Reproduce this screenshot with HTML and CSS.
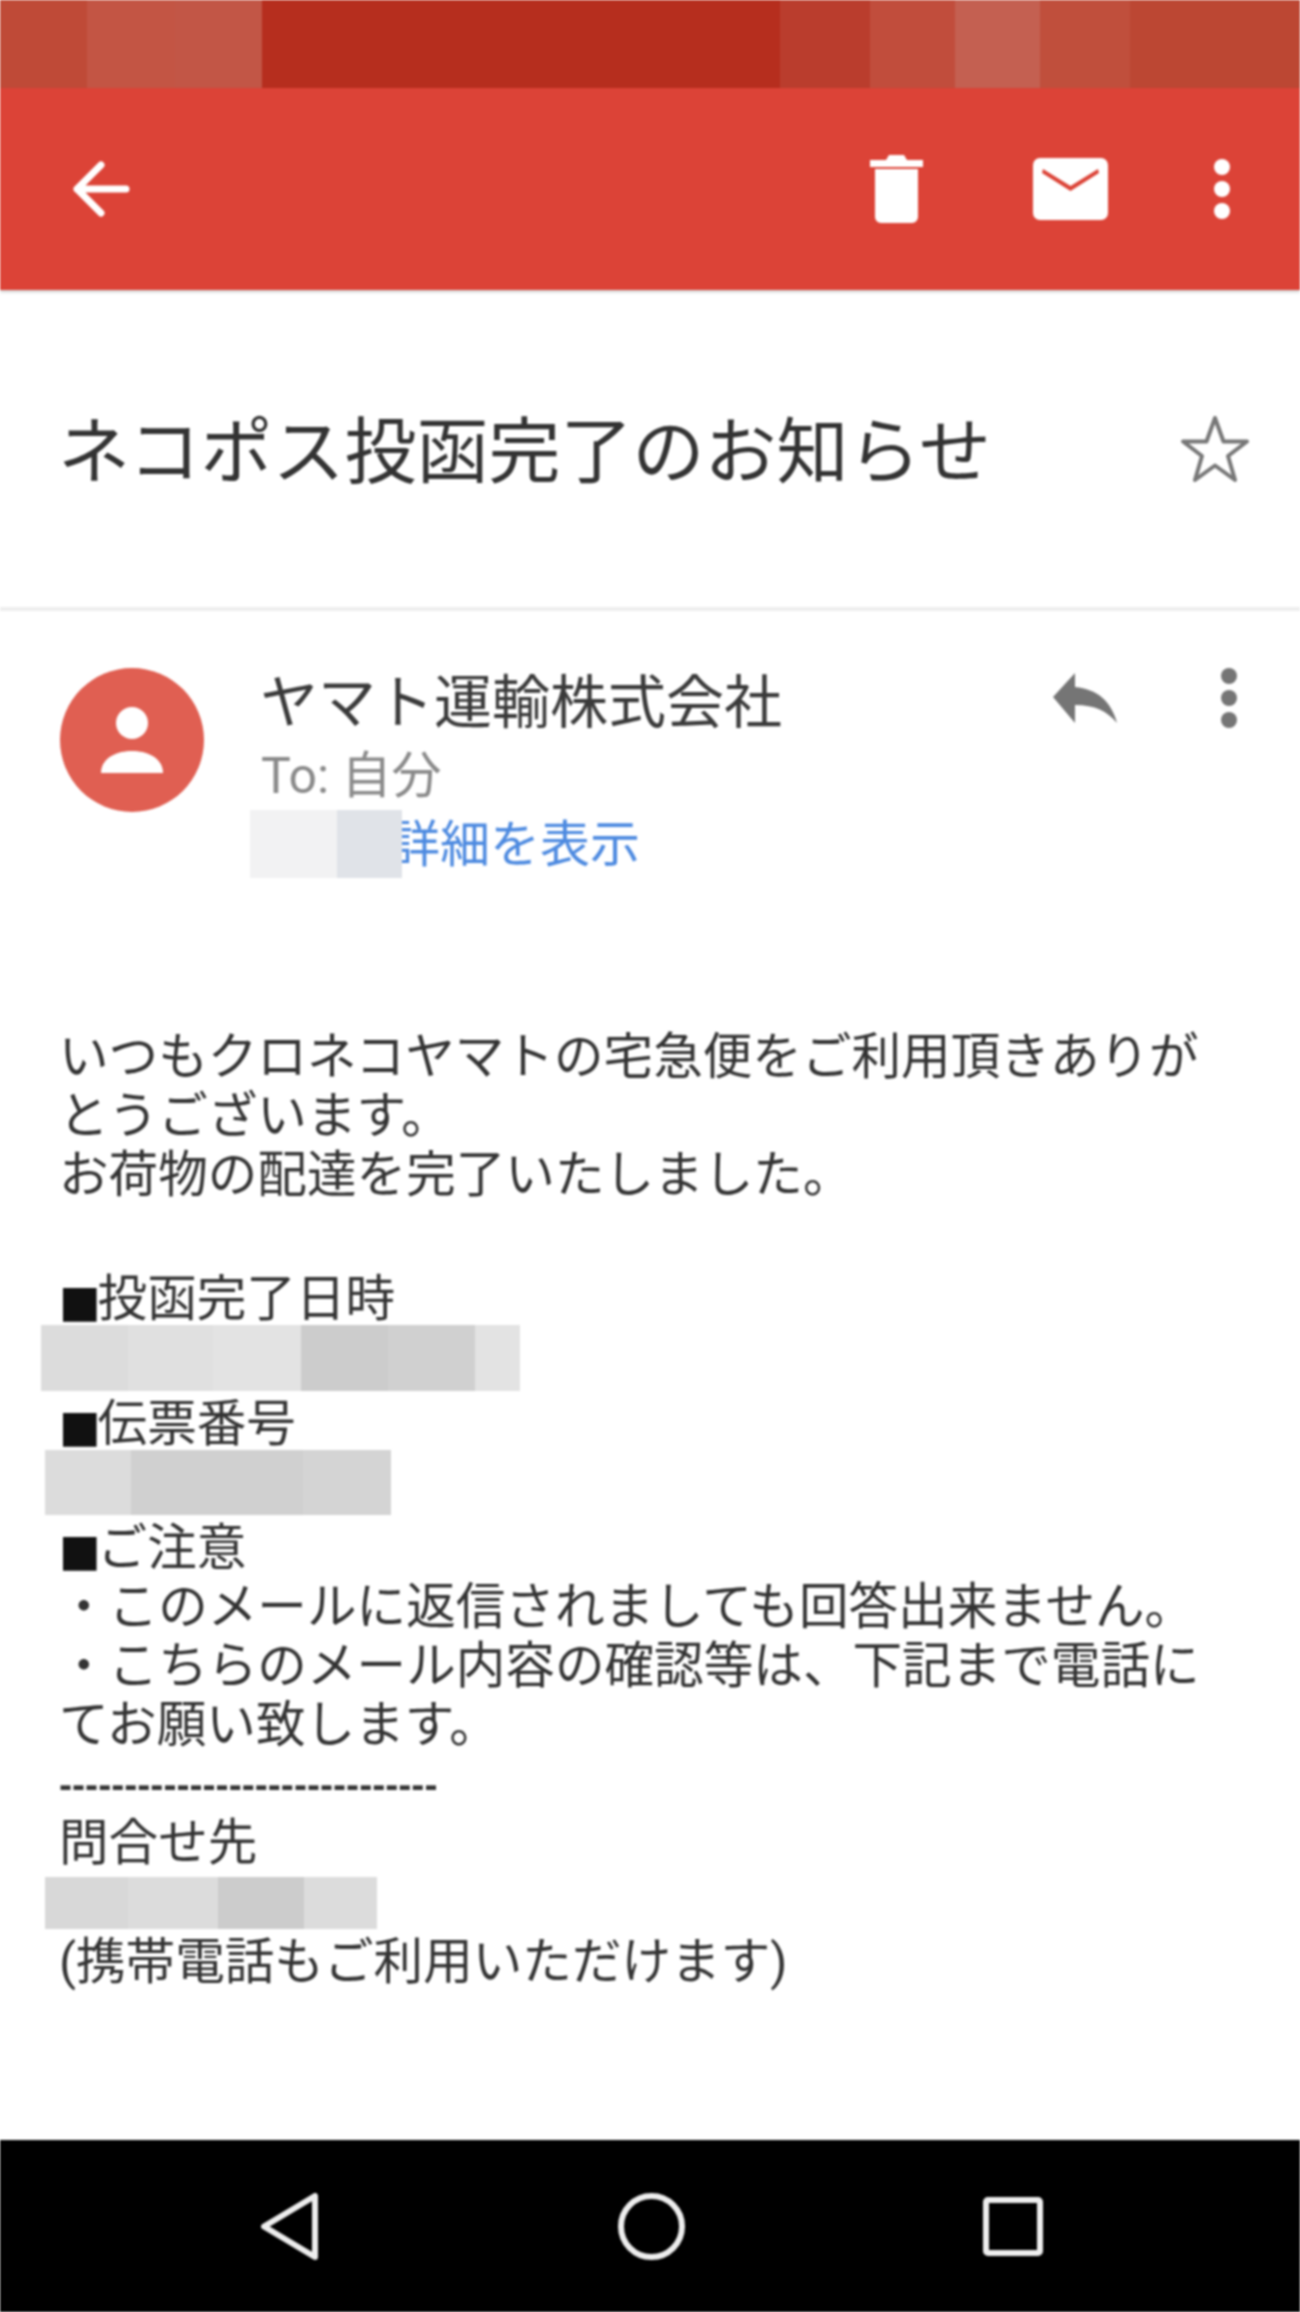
FILE: index.html
```html
<!DOCTYPE html>
<html lang="ja">
<head>
    <meta charset="UTF-8">
    <title>ネコポス投函完了のお知らせ</title>
    <link rel="stylesheet" href="styles.css">
</head>
<body>

<div class="screen">
    <div class="status-bar">
        <div class="shade-a"></div>
        <div class="shade-b"></div>
        <div class="shade-c"></div>
        <div class="shade-d"></div>
        <div class="shade-e"></div>
        <div class="shade-f"></div>
        <div class="shade-g"></div>
        <div class="shade-h"></div>
        <div class="shade-i"></div>
    </div>

    <div class="toolbar">
        <svg class="icon-back" viewBox="0 0 58 58"><path d="M54 29H5M29 5L5 29l24 24" fill="none" stroke="#fff" stroke-width="7" stroke-linecap="round" stroke-linejoin="round"/></svg>
        <div class="toolbar-actions">
            <svg class="icon-trash" viewBox="0 0 53 68"><path d="M0 5h16l3-5h15l3 5h16v7H0zM5 14h43v48a6 6 0 0 1-6 6H11a6 6 0 0 1-6-6z" fill="#fff"/></svg>
            <svg class="icon-mail" viewBox="0 0 75 62"><path d="M7 0h61a7 7 0 0 1 7 7v48a7 7 0 0 1-7 7H7a7 7 0 0 1-7-7V7a7 7 0 0 1 7-7zM10 11l-1 4 28.500 18L66 15l-1-4-27.500 17z" fill="#fff" fill-rule="evenodd"/></svg>
            <svg class="icon-dots" viewBox="0 0 16 60"><circle cx="8" cy="8" r="8"/><circle cx="8" cy="30" r="8"/><circle cx="8" cy="52" r="8"/></svg>
        </div>
    </div>

    <div class="subject-row">
        <h1 class="subject">ネコポス投函完了のお知らせ</h1>
        <svg class="icon-star" viewBox="0 0 70 70"><path d="M35 4l8.500 23.500H67L48 42l7 24-20-14.500L15 66l7-24L3 27.500h23.500z" fill="none" stroke="#777" stroke-width="4" stroke-linejoin="round"/></svg>
    </div>

    <div class="message-head">
        <div class="avatar">
            <svg class="icon-person" viewBox="0 0 62 66"><circle cx="31" cy="16" r="16" fill="#fff"/><path d="M0 66c0-14 14-22 31-22s31 8 31 22z" fill="#fff"/></svg>
        </div>
        <div class="sender-info">
            <div class="sender-name">ヤマト運輸株式会社</div>
            <div class="sender-to">To: 自分</div>
            <div class="sender-details">
                <div class="mosaic mosaic-sender">
                    <div class="tint-f2"></div>
                    <div class="tint-e0"></div>
                </div>
                <a class="details-link">詳細を表示</a>
            </div>
        </div>
        <div class="message-actions">
            <svg class="icon-reply" viewBox="0 0 64 50"><path d="M22 0v14c22 2 36 14 42 36-10-12-22-18-42-18v18L0 24z" fill="#757575"/></svg>
            <svg class="icon-dots icon-dots-gray" viewBox="0 0 16 60"><circle cx="8" cy="8" r="8"/><circle cx="8" cy="30" r="8"/><circle cx="8" cy="52" r="8"/></svg>
        </div>
    </div>

    <div class="message-body">
        <p>いつもクロネコヤマトの宅急便をご利用頂きありがとうございます。<br>お荷物の配達を完了いたしました。</p>

        <p class="section-first"><span class="mark">■</span>投函完了日時</p>
        <div class="mosaic mosaic-date">
            <div class="tint-dc"></div>
            <div class="tint-e0"></div>
            <div class="tint-e3"></div>
            <div class="tint-cc"></div>
            <div class="tint-d0"></div>
            <div class="tint-e3"></div>
        </div>

        <p><span class="mark">■</span>伝票番号</p>
        <div class="mosaic mosaic-slip">
            <div class="tint-dc"></div>
            <div class="tint-d0"></div>
            <div class="tint-d4"></div>
        </div>

        <p><span class="mark">■</span>ご注意</p>
        <p>・このメールに返信されましても回答出来ません。</p>
        <p>・こちらのメール内容の確認等は、下記まで電話にてお願い致します。</p>
        <p class="dashes">-----------------------------</p>
        <p>問合せ先</p>
        <div class="mosaic mosaic-phone">
            <div class="tint-d8"></div>
            <div class="tint-dc"></div>
            <div class="tint-cc"></div>
            <div class="tint-dc"></div>
        </div>
        <p>(携帯電話もご利用いただけます)</p>
    </div>

    <div class="nav-bar">
        <svg class="icon-nav-back" viewBox="0 0 57 67"><path d="M54 3v61L3 33.500z" fill="none" stroke="#eee" stroke-width="6" stroke-linejoin="round"/></svg>
        <svg class="icon-nav-home" viewBox="0 0 67 67"><circle cx="33.500" cy="33.500" r="30.500" fill="none" stroke="#eee" stroke-width="6"/></svg>
        <svg class="icon-nav-recent" viewBox="0 0 60 59"><rect x="3" y="3" width="54" height="53" rx="2" fill="none" stroke="#eee" stroke-width="6"/></svg>
    </div>
</div>

</body>
</html>
```

FILE: styles.css
```css
html, body {
    margin: 0;
    padding: 0;
    background-color: #fff;
}
body {
    font-family: Roboto, "Noto Sans CJK JP", sans-serif;
}
.screen {
    display: flex;
    flex-direction: column;
    width: 1300px;
    height: 2312px;
    overflow: hidden;
    filter: blur(1.1px);
}

/* Status bar, mosaic over the real icons */
.status-bar {
    display: grid;
    grid-template-columns: 87px 88px 87px 518px 90px 85px 85px 90px 1fr;
    height: 88px;
    flex: none;
}
.shade-a { background-color: #bf4a37; }
.shade-b { background-color: #c35544; }
.shade-c { background-color: #c25646; }
.shade-d { background-color: #b62e1e; }
.shade-e { background-color: #ba3d2d; }
.shade-f { background-color: #c14d3c; }
.shade-g { background-color: #c46051; }
.shade-h { background-color: #c04f3c; }
.shade-i { background-color: #bc4733; }

.toolbar {
    display: flex;
    align-items: center;
    justify-content: space-between;
    flex: none;
    height: 202px;
    padding: 0 70px 0 72px;
    background-color: #dc4337;
    box-shadow: 0 2px 3px rgba(0, 0, 0, 0.2);
}
.toolbar-actions {
    display: flex;
    align-items: center;
}
.icon-back {
    width: 58px;
    height: 58px;
}
.icon-trash {
    width: 53px;
    height: 68px;
    margin-right: 110px;
}
.icon-mail {
    width: 75px;
    height: 62px;
    margin-right: 106px;
}
.icon-dots {
    width: 16px;
    height: 60px;
    fill: #fff;
}
.icon-dots-gray {
    fill: #757575;
}

.subject-row {
    display: flex;
    align-items: center;
    justify-content: space-between;
    flex: none;
    height: 317px;
    padding: 0 50px 0 58px;
    border-bottom: 4px solid #eee;
}
.subject {
    margin: 0 0 6px;
    font-size: 72px;
    font-weight: 400;
    color: #333;
}
.icon-star {
    width: 70px;
    height: 70px;
}

.message-head {
    display: flex;
    align-items: flex-start;
    flex: none;
    padding: 57px 63px 0 60px;
}
.avatar {
    display: flex;
    align-items: center;
    justify-content: center;
    flex: none;
    width: 144px;
    height: 144px;
    border-radius: 50%;
    background-color: #e05f52;
}
.icon-person {
    width: 62px;
    height: 66px;
}
.sender-info {
    flex: 1;
    margin-left: 59px;
}
.sender-name {
    height: 70px;
    line-height: 70px;
    margin-left: -3px;
    font-size: 58px;
    color: #3a3a3a;
}
.sender-to {
    height: 70px;
    line-height: 76px;
    margin-left: -2px;
    font-size: 50px;
    color: #8a8a8a;
}
.sender-details {
    display: flex;
    align-items: flex-start;
    height: 70px;
    margin-left: -13px;
}
.details-link {
    position: relative;
    margin-left: -12px;
    line-height: 74px;
    font-size: 50px;
    color: #4d8ae0;
}
.message-actions {
    display: flex;
    align-items: flex-start;
}
.icon-reply {
    width: 64px;
    height: 50px;
    margin: 5px 104px 0 0;
}

/* Pixelated blocks hiding personal data */
.mosaic {
    display: grid;
    position: relative;
    z-index: 1;
    flex: none;
}
.mosaic-sender {
    grid-template-columns: 87px 65px;
    height: 68px;
    margin-top: 2px;
}
.mosaic-date {
    grid-template-columns: 87px 85px 88px 87px 87px 45px;
    width: 479px;
    height: 66px;
    margin-left: -18px;
}
.mosaic-slip {
    grid-template-columns: 86px 172px 88px;
    width: 346px;
    height: 65px;
    margin-left: -14px;
}
.mosaic-phone {
    grid-template-columns: 83px 90px 86px 73px;
    width: 332px;
    height: 52px;
    margin: 8px 0 0 -14px;
}
.tint-f2 { background-color: #f2f2f3; }
.tint-e0 { background-color: #e0e0e0; }
.mosaic-sender .tint-e0 { background-color: #e0e3e8; }
.tint-e3 { background-color: #e3e3e3; }
.tint-dc { background-color: #dcdcdc; }
.tint-d8 { background-color: #d8d8d8; }
.tint-d4 { background-color: #d4d4d4; }
.tint-d0 { background-color: #d0d0d0; }
.tint-cc { background-color: #cccccc; }

.message-body {
    flex: 1;
    padding: 146px 81px 0 59px;
    font-size: 49.600px;
    line-height: 59px;
    color: #333;
}
/* the glyphs sit a little lower in the line than the box says */
.message-body p {
    margin: 0 0 -4px;
    padding-top: 4px;
}
.message-body .section-first {
    margin-top: 65px;
}
.mark {
    font-family: "DejaVu Sans", sans-serif;
    font-size: 44px;
    line-height: 1;
    letter-spacing: -3px;
    color: #111;
}
.message-body .dashes {
    font-family: "Liberation Sans", sans-serif;
    font-size: 39.200px;
    font-weight: 700;
    white-space: nowrap;
}

.nav-bar {
    display: flex;
    align-items: center;
    flex: none;
    height: 172px;
    padding-left: 261px;
    background-color: #000;
}
.icon-nav-back {
    width: 57px;
    height: 67px;
    margin-right: 300px;
}
.icon-nav-home {
    width: 67px;
    height: 67px;
    margin-right: 298px;
}
.icon-nav-recent {
    width: 60px;
    height: 59px;
}
```
